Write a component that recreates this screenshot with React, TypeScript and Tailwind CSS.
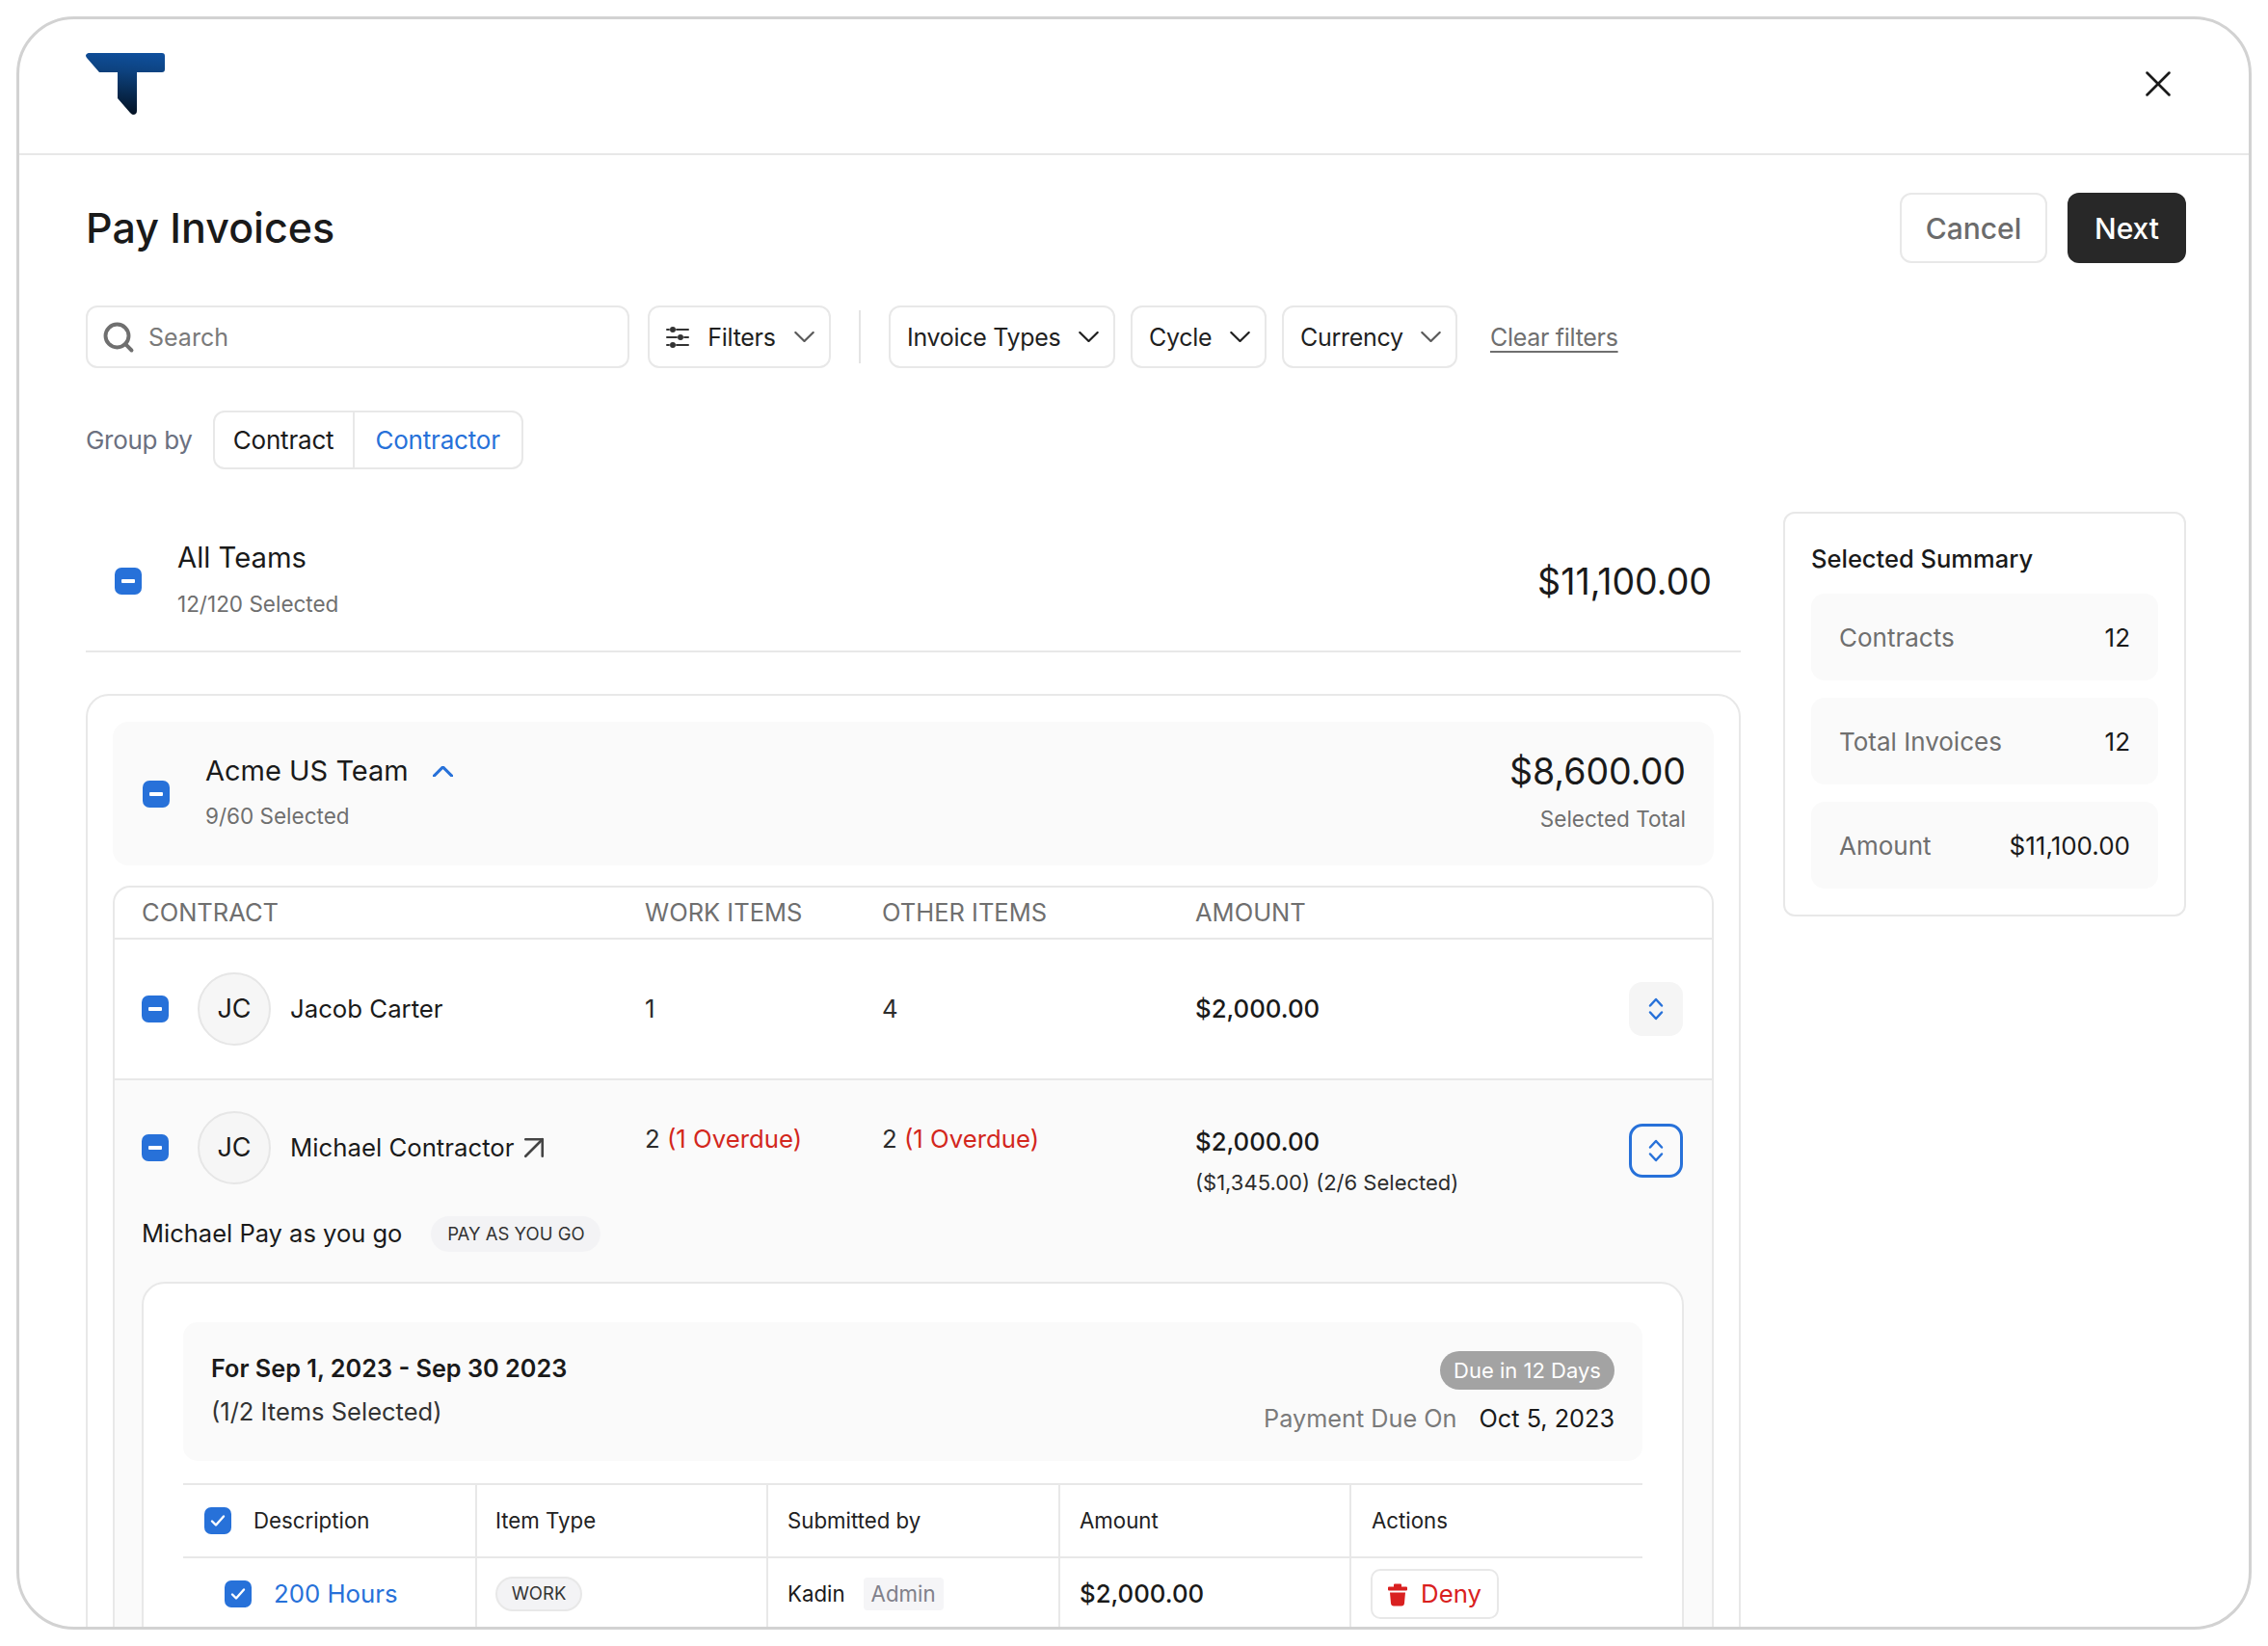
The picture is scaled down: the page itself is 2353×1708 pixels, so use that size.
import { X, Search, ArrowUpRight } from 'lucide-react';
import clsx from 'clsx';
import type { ReactNode } from 'react';

function Chevron({ up, className }: { up?: boolean; className?: string }) {
    return (
        <svg viewBox="0 0 22 12" fill="none" stroke="currentColor" strokeWidth="2.4" strokeLinecap="round" strokeLinejoin="round" className={clsx('w-[21px] h-[11px]', className)}>
            <path d={up ? 'M1 11 L11 1 L21 11' : 'M1 1 L11 11 L21 1'} />
        </svg>
    );
}

function Logo() {
    return (
        <svg viewBox="0 0 82 64" className="w-[82px] h-[64px]">
            <defs>
                <linearGradient id="logoFill" x1="0.6" y1="0" x2="0.5" y2="1">
                    <stop offset="0" stopColor="#0f4f9c" />
                    <stop offset="0.3" stopColor="#0d427f" />
                    <stop offset="1" stopColor="#031223" />
                </linearGradient>
            </defs>
            <path
                d="M3 0 H79 Q82 0 82 3 V17 Q82 20 79 20 H53 V60 Q53 64 49 64 Q48 64 46 62 L33 47 V20 H14 L1 5 Q-1 2 1 1 Q2 0 3 0 Z"
                fill="url(#logoFill)"
            />
        </svg>
    );
}

function Indeterminate() {
    return (
        <div className="w-[28px] h-[28px] rounded-[7px] bg-[#2771d9] flex items-center justify-center shrink-0">
            <div className="w-[14px] h-[4px] rounded-[1px] bg-white" />
        </div>
    );
}

function Checked() {
    return (
        <div className="w-[28px] h-[28px] rounded-[7px] bg-[#2771d9] flex items-center justify-center shrink-0">
            <svg viewBox="0 0 16 14" fill="none" stroke="white" strokeWidth="2.4" strokeLinecap="round" strokeLinejoin="round" className="w-[16px] h-[14px]">
                <path d="M2 7.5 L6 11.5 L14 2.5" />
            </svg>
        </div>
    );
}

function Avatar() {
    return (
        <div className="w-[76px] h-[76px] rounded-full bg-[#f6f6f6] border-2 border-[#e6e6e6] flex items-center justify-center text-[27px] text-[#1a1a1a] shrink-0">
            JC
        </div>
    );
}

function ExpandButton({ active }: { active?: boolean }) {
    return (
        <div
            className={clsx(
                'w-[56px] h-[56px] rounded-[14px] flex items-center justify-center',
                active ? 'border-[3px] border-[#2771d9]' : 'bg-[#f5f5f5]'
            )}
        >
            <svg viewBox="0 0 16 24" fill="none" stroke="#2771d9" strokeWidth="2.5" strokeLinecap="round" strokeLinejoin="round" className="w-[16px] h-[24px]">
                <path d="M2 8.5 L8 2 L14 8.5" />
                <path d="M2 15.5 L8 22 L14 15.5" />
            </svg>
        </div>
    );
}

function FilterButton({ children, width }: { children: ReactNode; width: string }) {
    return (
        <div className={clsx('h-[65px] rounded-[12px] border-2 border-[#e8e8e8] flex items-center justify-between pl-[17px] pr-[15px] text-[25px] tracking-[-0.3px] text-[#1f1f1f]', width)}>
            {children}
        </div>
    );
}

function SummaryRow({ label, value }: { label: string; value: string }) {
    return (
        <div className="h-[90px] rounded-[14px] bg-[#fafafa] flex items-center justify-between pl-[29px] pr-[29px] pt-[1px] text-[26px]">
            <span className="text-[#6f6f6f]">{label}</span>
            <span className="text-[#1a1a1a]">{value}</span>
        </div>
    );
}

function Overdue({ count }: { count: string }) {
    return (
        <span className="block mt-[9px] text-[25.75px] leading-[40px] text-[#2c2c2c]">
            {count} <span className="text-[#d3271d]">(1 Overdue)</span>
        </span>
    );
}

const cell = 'border-r-2 border-[#e8e8e8] flex items-center';

export default function App() {
    return (
        <div className="h-[1708px] bg-white pt-[17px] pl-[17px] font-['Inter',sans-serif] text-[#1a1a1a] overflow-hidden">
            <div className="w-[2319px] h-[1674px] border-[3px] border-[#d2d2d2] rounded-[60px] overflow-hidden">
                <header className="h-[141px] border-b-2 border-[#e8e8e8] flex items-start justify-between pl-[69px] pr-[71px]">
                    <div className="mt-[35px]">
                        <Logo />
                    </div>
                    <X className="w-[46px] h-[46px] mt-[44px] text-[#1a1a1a]" strokeWidth={1.35} />
                </header>

                <main className="pl-[69px] pr-[65px] pt-[39px]">
                    <div className="flex items-center justify-between h-[73px]">
                        <h1 className="text-[43px] font-medium text-[#1a1a1a]">Pay Invoices</h1>
                        <div className="flex gap-[21px] text-[30px] font-medium">
                            <div className="w-[153px] h-[73px] pt-[2px] rounded-[12px] border-2 border-[#e8e8e8] flex items-center justify-center text-[#6b6b6b]">Cancel</div>
                            <div className="w-[123px] h-[73px] pt-[2px] rounded-[12px] bg-[#282828] flex items-center justify-center text-white">Next</div>
                        </div>
                    </div>

                    <div className="flex items-center mt-[44px] h-[65px]">
                        <div className="w-[564px] h-[65px] rounded-[12px] border-2 border-[#e8e8e8] flex items-center pl-[14px] gap-[13px] text-[25px] text-[#7a7a7a]">
                            <Search className="w-[36px] h-[36px] text-[#6f6f6f]" strokeWidth={2.6} />
                            <span className="pt-[2px]">Search</span>
                        </div>
                        <div className="ml-[19px]">
                            <FilterButton width="w-[190px]">
                                <svg viewBox="0 0 24 24" fill="none" stroke="#333" strokeWidth="2" strokeLinecap="round" className="w-[24px] h-[24px]">
                                    <path d="M1 4 H3 M11 4 H23 M1 12 H11 M19 12 H23 M1 20 H3 M11 20 H23" />
                                    <circle cx="7" cy="4" r="2" fill="#333" />
                                    <circle cx="15" cy="12" r="2" fill="#333" />
                                    <circle cx="7" cy="20" r="2" fill="#333" />
                                </svg>
                                <span className="pt-[2px]">Filters</span>
                                <Chevron className="text-[#5a5a5a]" />
                            </FilterButton>
                        </div>
                        <div className="w-[2px] h-[55px] bg-[#e4e4e4] ml-[29px] mr-[29px]" />
                        <div className="flex gap-[16px]">
                            <FilterButton width="w-[235px]">
                                <span className="pt-[2px]">Invoice Types</span>
                                <Chevron />
                            </FilterButton>
                            <FilterButton width="w-[141px]">
                                <span className="pt-[2px]">Cycle</span>
                                <Chevron />
                            </FilterButton>
                            <FilterButton width="w-[182px]">
                                <span className="pt-[2px]">Currency</span>
                                <Chevron className="text-[#5a5a5a]" />
                            </FilterButton>
                        </div>
                        <span className="ml-[34px] pt-[2px] text-[25px] tracking-[-0.3px] text-[#6f6f6f] underline underline-offset-[5px] decoration-2">Clear filters</span>
                    </div>

                    <div className="flex items-center mt-[44px] h-[61px]">
                        <span className="text-[26px] text-[#6b7080] tracking-[-0.3px]">Group by</span>
                        <div className="ml-[21px] h-[61px] rounded-[12px] border-2 border-[#e8e8e8] flex items-center text-[26px] tracking-[-0.2px]">
                            <div className="w-[145px] h-full border-r-2 border-[#e8e8e8] flex items-center justify-center text-[#1a1a1a]">Contract</div>
                            <div className="w-[173px] h-full flex items-center justify-center text-[#2771d9]">Contractor</div>
                        </div>
                    </div>

                    <div className="flex gap-[44px] mt-[44px]">
                        <div className="w-[1717px] shrink-0">
                            <div className="h-[146px] border-b-2 border-[#e8e8e8] flex items-center justify-between pl-[30px] pr-[30px]">
                                <div className="flex items-center gap-[37px]">
                                    <Indeterminate />
                                    <div className="flex flex-col gap-[15px] pb-[3px]">
                                        <span className="text-[29.25px] leading-[36px]">All Teams</span>
                                        <span className="text-[22.5px] leading-[30px] text-[#6f6f6f]">12/120 Selected</span>
                                    </div>
                                </div>
                                <span className="text-[37.5px] pt-[3px]">$11,100.00</span>
                            </div>

                            <div className="mt-[43px] border-2 border-[#e8e8e8] rounded-[24px] px-[26px] pt-[27px] h-[1000px]">
                                <div className="h-[149px] rounded-[16px] bg-[#fafafa] flex items-center justify-between pl-[31px] pr-[29px]">
                                    <div className="flex items-center gap-[37px]">
                                        <Indeterminate />
                                        <div className="flex flex-col gap-[14px] pb-[3px]">
                                            <div className="flex items-center gap-[25px]">
                                                <span className="text-[29px] leading-[36px]">Acme US Team</span>
                                                <Chevron up className="text-[#2771d9] w-[15px] h-[8px] [stroke-width:3.4]" />
                                            </div>
                                            <span className="text-[22.5px] leading-[30px] text-[#6f6f6f]">9/60 Selected</span>
                                        </div>
                                    </div>
                                    <div className="flex flex-col items-end gap-[11px] pb-[4px]">
                                        <span className="text-[37.5px] leading-[46px]">$8,600.00</span>
                                        <span className="text-[22.5px] leading-[30px] text-[#6f6f6f]">Selected Total</span>
                                    </div>
                                </div>

                                <div className="mt-[21px] border-2 border-[#e8e8e8] rounded-[18px] h-[900px] overflow-hidden">
                                    <div className="h-[54px] border-b-2 border-[#e8e8e8] grid grid-cols-[550px_246px_325px_1fr] items-center text-[25.5px] text-[#6f6f6f]">
                                        <span className="pl-[28px]">CONTRACT</span>
                                        <span>WORK ITEMS</span>
                                        <span>OTHER ITEMS</span>
                                        <span>AMOUNT</span>
                                    </div>

                                    <div className="h-[146px] border-b-2 border-[#e8e8e8] grid grid-cols-[550px_246px_325px_1fr] items-center text-[25.75px]">
                                        <div className="flex items-center pl-[28px]">
                                            <Indeterminate />
                                            <div className="ml-[30px]">
                                                <Avatar />
                                            </div>
                                            <span className="ml-[20px]">Jacob Carter</span>
                                        </div>
                                        <span className="text-[#2c2c2c]">1</span>
                                        <span className="text-[#2c2c2c]">4</span>
                                        <div className="flex items-center justify-between pr-[30px]">
                                            <span className="font-medium">$2,000.00</span>
                                            <ExpandButton />
                                        </div>
                                    </div>

                                    <div className="bg-[#fafafa] h-[700px]">
                                        <div className="grid grid-cols-[550px_246px_325px_1fr] items-start pt-[32px]">
                                            <div className="flex items-center pl-[28px] text-[25.75px]">
                                                <Indeterminate />
                                                <div className="ml-[30px]">
                                                    <Avatar />
                                                </div>
                                                <span className="ml-[20px]">Michael Contractor</span>
                                                <ArrowUpRight className="w-[42px] h-[42px] text-[#444]" strokeWidth={1.5} />
                                            </div>
                                            <Overdue count="2" />
                                            <Overdue count="2" />
                                            <div className="flex justify-between pr-[30px]">
                                                <div className="flex flex-col pt-[12px]">
                                                    <span className="text-[25.75px] leading-[40px] font-medium">$2,000.00</span>
                                                    <span className="text-[22px] leading-[30px] mt-[7px] text-[#2c2c2c]">($1,345.00) (2/6 Selected)</span>
                                                </div>
                                                <div className="pt-[13px]">
                                                    <ExpandButton active />
                                                </div>
                                            </div>
                                        </div>

                                        <div className="flex items-center h-[37px] mt-[20px] pl-[28px]">
                                            <span className="text-[25.5px]">Michael Pay as you go</span>
                                            <span className="ml-[30px] h-[37px] w-[176px] rounded-full bg-[#f3f3f5] flex items-center justify-center text-[18.5px] text-[#333]">PAY AS YOU GO</span>
                                        </div>

                                        <div className="mt-[31px] ml-[28px] mr-[29px] border-2 border-[#e8e8e8] rounded-[24px] bg-white px-[41px] pt-[40px] h-[600px]">
                                            <div className="h-[144px] rounded-[15px] bg-[#fafafa] flex justify-between pl-[29px] pr-[29px]">
                                                <div className="flex flex-col justify-center gap-[13px] pb-[3px]">
                                                    <span className="text-[25.25px] leading-[32px] font-semibold">For Sep 1, 2023 - Sep 30 2023</span>
                                                    <span className="text-[25.5px] leading-[32px] text-[#333]">(1/2 Items Selected)</span>
                                                </div>
                                                <div className="self-start mt-[30px] flex flex-col items-end gap-[15px]">
                                                    <span className="h-[40px] w-[181px] rounded-full bg-[#a3a3a3] flex items-center justify-center text-[22px] text-white">Due in 12 Days</span>
                                                    <div className="flex items-center h-[32px] gap-[23px] text-[25.25px]">
                                                        <span className="text-[#7a7a7a]">Payment Due On</span>
                                                        <span>Oct 5, 2023</span>
                                                    </div>
                                                </div>
                                            </div>

                                            <div className="mt-[23px] border-t-2 border-[#e8e8e8]">
                                                <div className="h-[76px] border-b-2 border-[#e8e8e8] grid grid-cols-[305px_302px_303px_302px_1fr] text-[22.25px] text-[#222]">
                                                    <div className={clsx(cell, 'pl-[22px] gap-[23px]')}>
                                                        <Checked />
                                                        Description
                                                    </div>
                                                    <div className={clsx(cell, 'pl-[19px]')}>Item Type</div>
                                                    <div className={clsx(cell, 'pl-[20px]')}>Submitted by</div>
                                                    <div className={clsx(cell, 'pl-[20px]')}>Amount</div>
                                                    <div className="flex items-center pl-[21px]">Actions</div>
                                                </div>
                                                <div className="h-[74px] grid grid-cols-[305px_302px_303px_302px_1fr] text-[25.75px]">
                                                    <div className={clsx(cell, 'pl-[43px] gap-[23px] text-[#2771d9]')}>
                                                        <Checked />
                                                        200 Hours
                                                    </div>
                                                    <div className={clsx(cell, 'pl-[19px]')}>
                                                        <span className="h-[36px] w-[90px] rounded-full bg-[#f3f3f5] border-2 border-[#e8e8e8] flex items-center justify-center text-[18.5px] text-[#333]">WORK</span>
                                                    </div>
                                                    <div className={clsx(cell, 'pl-[20px] text-[22.25px]')}>
                                                        Kadin
                                                        <span className="ml-[19px] h-[34px] w-[83px] rounded-[4px] bg-[#f5f5f7] flex items-center justify-center text-[#80808a]">Admin</span>
                                                    </div>
                                                    <div className={clsx(cell, 'pl-[20px] font-medium')}>$2,000.00</div>
                                                    <div className="flex items-center pl-[20px]">
                                                        <div className="w-[133px] h-[52px] rounded-[10px] border-2 border-[#e8e8e8] flex items-center justify-center gap-[14px] text-[#d92020]">
                                                            <svg viewBox="0 0 20 24" fill="#d92020" className="w-[20px] h-[25px]">
                                                                <path d="M7 1 H13 Q14 1 14 2 V4 H19 Q20 4 20 5 V7 Q20 8 19 8 H1 Q0 8 0 7 V5 Q0 4 1 4 H6 V2 Q6 1 7 1 Z" />
                                                                <path d="M2 10 H18 L17 21 Q16.8 24 14 24 H6 Q3.2 24 3 21 Z" />
                                                            </svg>
                                                            Deny
                                                        </div>
                                                    </div>
                                                </div>
                                            </div>
                                        </div>
                                    </div>
                                </div>
                            </div>
                        </div>

                        <aside className="w-[418px] h-[420px] shrink-0 border-2 border-[#e8e8e8] rounded-[12px] px-[27px] pt-[30px]">
                            <h2 className="text-[25.5px] leading-[34px] font-medium">Selected Summary</h2>
                            <div className="mt-[19px] flex flex-col gap-[18px]">
                                <SummaryRow label="Contracts" value="12" />
                                <SummaryRow label="Total Invoices" value="12" />
                                <SummaryRow label="Amount" value="$11,100.00" />
                            </div>
                        </aside>
                    </div>
                </main>
            </div>
        </div>
    );
}
